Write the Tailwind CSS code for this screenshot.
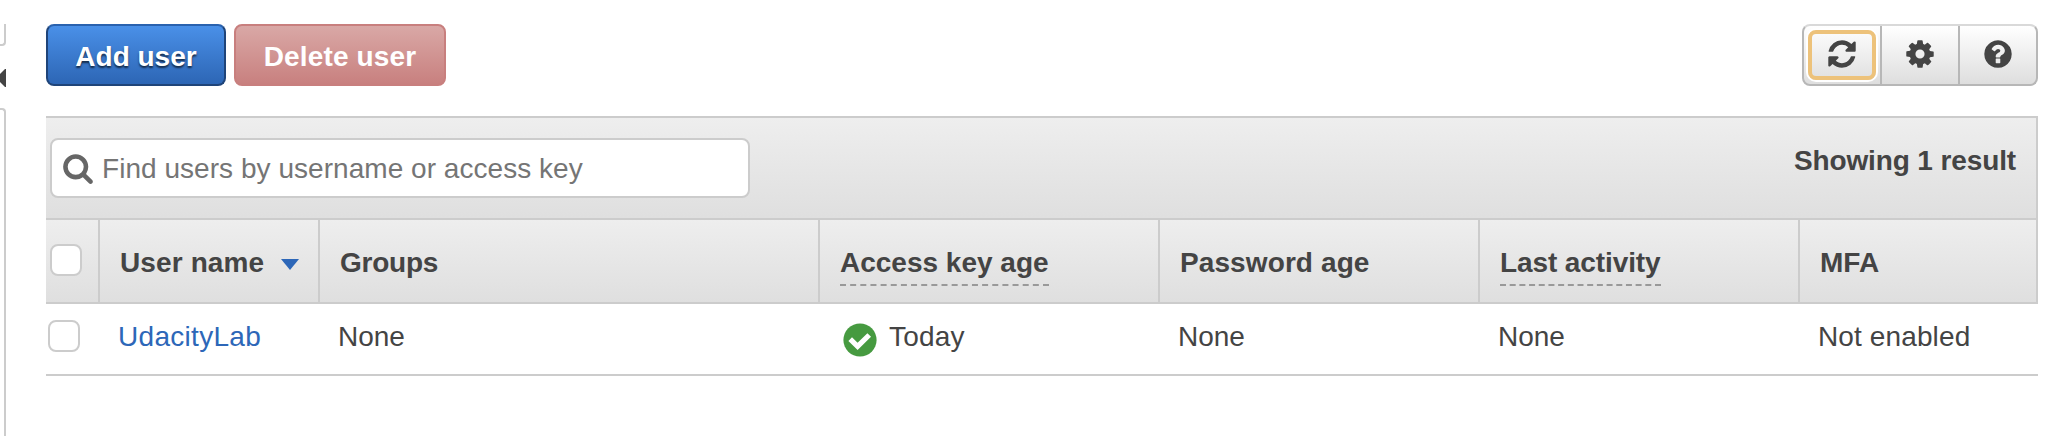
<!DOCTYPE html>
<html lang="en">
<head>
<meta charset="utf-8">
<title>Users</title>
<script src="https://cdn.jsdelivr.net/npm/@tailwindcss/browser@4"></script>
</head>
<body class="bg-white font-['Liberation_Sans',Arial,sans-serif] text-[28px] leading-8 text-[#444]">
<div class="flex h-[436px] w-[2072px] overflow-hidden">
  <!-- edge of the collapsed side navigation -->
  <aside class="flex w-1.5 shrink-0 flex-col pt-6">
    <div class="h-[22px] rounded-br-[4px] border-r-2 border-b-2 border-[#ccc]"></div>
    <svg class="mt-[23px] h-[18px] w-1.5" viewBox="0 0 6 18" fill="#444"><path d="M6 0H5L0 5V13L5 18H6z"/></svg>
    <div class="mt-[21px] flex-1 rounded-tr-[4px] border-t-2 border-r-2 border-[#ccc]"></div>
  </aside>

  <main class="ml-10 flex w-[1992px] flex-col pt-6">
    <div class="flex h-[62px] justify-between">
      <div class="flex gap-2 font-bold text-white">
        <button class="w-[180px] rounded-lg border-2 border-[#1f4479] border-t-[#2a62ae] bg-linear-to-b from-[#4a90e8] to-[#2d66b5] pt-1 [text-shadow:0_2px_2px_rgba(0,0,0,0.65)]">Add user</button>
        <button class="w-[212px] rounded-lg border-2 border-[#c87f7e] bg-linear-to-b from-[#d9a8a6] to-[#c8807f] pt-1 tracking-[0.15px]">Delete user</button>
      </div>
      <div class="flex w-[236px] overflow-hidden rounded-lg border-2 border-[#b7b7b7] border-t-[#d9d9d9] bg-linear-to-b from-white to-[#dedede]">
        <button class="flex w-[76px] items-center justify-center">
          <span class="flex h-[50px] w-[68px] items-center justify-center rounded-lg border-4 border-[#edc27a] pb-0.5 shadow-[0_0_0_2px_#fff]">
            <svg class="size-8 shrink-0" viewBox="0 0 1792 1792" fill="#444"><path d="M1639 1056q0 5-1 7-64 268-268 434.500t-478 166.500q-146 0-282.500-55t-243.500-157l-129 129q-19 19-45 19t-45-19-19-45v-448q0-26 19-45t45-19h448q26 0 45 19t19 45-19 45l-137 137q71 66 161 102t187 36q134 0 250-65t186-179q11-17 53-117 8-23 30-23h192q13 0 22.500 9.500t9.500 22.500zm25-800v448q0 26-19 45t-45 19h-448q-26 0-45-19t-19-45 19-45l138-138q-148-137-349-137-134 0-250 65t-186 179q-11 17-53 117-8 23-30 23h-199q-13 0-22.500-9.500t-9.500-22.500v-7q65-268 270-434.500t480-166.500q146 0 284 55.500t245 156.500l130-129q19-19 45-19t45 19 19 45z"/></svg>
          </span>
        </button>
        <button class="flex w-[78px] items-center justify-center border-l-2 border-[#b7b7b7] pb-0.5">
          <svg class="size-8" viewBox="0 0 1792 1792" fill="#444"><path d="M1152 896q0-106-75-181t-181-75-181 75-75 181 75 181 181 75 181-75 75-181zm512-109v222q0 12-8 23t-20 13l-185 28q-19 54-39 91 35 50 107 138 10 12 10 25t-9 23q-27 37-99 108t-94 71q-12 0-26-9l-138-108q-44 23-91 38-16 136-29 186-7 28-36 28h-222q-14 0-24.500-8.500t-11.500-21.500l-28-184q-49-16-90-37l-141 107q-10 9-25 9-14 0-25-11-126-114-165-168-7-10-7-23 0-12 8-23 15-21 51-66.500t54-70.500q-27-50-41-99l-183-27q-13-2-21-12.500t-8-23.500v-222q0-12 8-23t19-13l186-28q14-46 39-92-40-57-107-138-10-12-10-24 0-10 9-23 26-36 98.500-107.500t94.500-71.500q13 0 26 10l138 107q44-23 91-38 16-136 29-186 7-28 36-28h222q14 0 24.500 8.500t11.500 21.500l28 184q49 16 90 37l142-107q9-9 24-9 13 0 25 10 129 119 165 170 7 8 7 22 0 12-8 23-15 21-51 66.500t-54 70.500q26 50 41 98l183 28q13 2 21 12.500t8 23.500z"/></svg>
        </button>
        <button class="flex w-[78px] items-center justify-center border-l-2 border-[#b7b7b7] pb-0.5">
          <svg class="size-8" viewBox="0 0 1792 1792" fill="#444"><path d="M1024 1376v-192q0-14-9-23t-23-9h-192q-14 0-23 9t-9 23v192q0 14 9 23t23 9h192q14 0 23-9t9-23zm256-672q0-88-55.500-163t-138.500-116-170-41q-243 0-371 213-15 24 8 42l132 100q7 6 19 6 16 0 25-12 53-68 86-92 34-24 86-24 48 0 85.500 26t37.500 59q0 38-20 61t-68 45q-63 28-115.500 86.500t-52.500 125.500v36q0 14 9 23t23 9h192q14 0 23-9t9-23q0-19 21.500-49.500t54.500-49.500q32-18 49-28.500t46-35 44.500-48 28-60.500 12.500-81zm384 192q0 209-103 385.500t-279.500 279.500-385.500 103-385.500-103-279.500-279.500-103-385.500 103-385.500 279.500-279.500 385.500-103 385.500 103 279.500 279.500 103 385.500z"/></svg>
        </button>
      </div>
    </div>

    <section class="mt-[30px]">
      <div class="flex h-[102px] justify-between border-t-2 border-r-2 border-[#ccc] bg-linear-to-b from-[#eee] to-[#dfdfdf] pt-5 pr-5 pl-1">
        <label class="flex h-[60px] w-[700px] items-center rounded-lg border-2 border-[#ccc] bg-white pl-2.5 text-[#757575]">
          <svg class="mr-2 size-8 shrink-0" viewBox="0 0 1792 1792" fill="#666"><path d="M1216 832q0-185-131.500-316.500t-316.500-131.500-316.500 131.500-131.500 316.500 131.500 316.500 316.500 131.500 316.500-131.500 131.500-316.500zm512 832q0 52-38 90t-90 38q-54 0-90-38l-343-342q-179 124-399 124-143 0-273.500-55.500t-225-150-150-225-55.500-273.500 55.500-273.500 150-225 225-150 273.500-55.500 273.500 55.500 225 150 150 225 55.500 273.500q0 220-124 399l343 343q37 37 37 90z"/></svg>
          <span class="pt-0.5 tracking-[0.04px]">Find users by username or access key</span>
        </label>
        <div class="pt-[7px] font-bold tracking-[-0.12px]">Showing 1 result</div>
      </div>

      <div class="grid h-[86px] grid-cols-[54px_220px_500px_340px_320px_320px_238px] border-2 border-l-0 border-[#ccc] bg-linear-to-b from-[#eee] to-[#dfdfdf] font-bold">
        <div class="border-r-2 border-[#ccc] pt-6 pl-1"><div class="size-8 rounded-lg border-2 border-[#ccc] bg-white"></div></div>
        <div class="flex border-r-2 border-[#ccc] pt-[27px] pl-5"><span class="tracking-[0.12px]">User name</span>
          <svg class="mt-3 ml-[17px] h-[11px] w-[18px]" viewBox="0 0 18 11" fill="#2d67b8"><path d="M0 0H18L9 11z"/></svg></div>
        <div class="border-r-2 border-[#ccc] pt-[27px] pl-5 tracking-[-0.25px]">Groups</div>
        <div class="border-r-2 border-[#ccc] pt-[27px] pl-5"><span class="inline-block h-[39px] border-b-2 border-dashed border-[#999]">Access key age</span></div>
        <div class="border-r-2 border-[#ccc] pt-[27px] pl-5 tracking-[0.1px]">Password age</div>
        <div class="border-r-2 border-[#ccc] pt-[27px] pl-5 tracking-[-0.1px]"><span class="inline-block h-[39px] border-b-2 border-dashed border-[#999]">Last activity</span></div>
        <div class="pt-[27px] pl-5">MFA</div>
      </div>

      <div class="grid h-[72px] grid-cols-[54px_220px_500px_340px_320px_320px_238px] border-b-2 border-[#ccc]">
        <div class="pt-4 pl-0.5"><div class="size-8 rounded-lg border-2 border-[#ccc] bg-white"></div></div>
        <div class="pt-[17px] pl-[18px] tracking-[0.3px] text-[#2d67b8]">UdacityLab</div>
        <div class="pt-[17px] pl-[18px]">None</div>
        <div class="flex gap-3 pt-[17px] pl-[23px]">
          <svg class="mt-0.5 size-[34px]" viewBox="0 0 34 34"><circle cx="17" cy="17" r="16.600" fill="#469a40"/><path d="M7.200 16.200L14.600 23.300L26.200 12" fill="none" stroke="#fff" stroke-width="5.200"/></svg>
          <span class="tracking-[0.2px]">Today</span>
        </div>
        <div class="pt-[17px] pl-[18px]">None</div>
        <div class="pt-[17px] pl-[18px]">None</div>
        <div class="pt-[17px] pl-[18px] tracking-[0.12px]">Not enabled</div>
      </div>
    </section>
  </main>
</div>
</body>
</html>
